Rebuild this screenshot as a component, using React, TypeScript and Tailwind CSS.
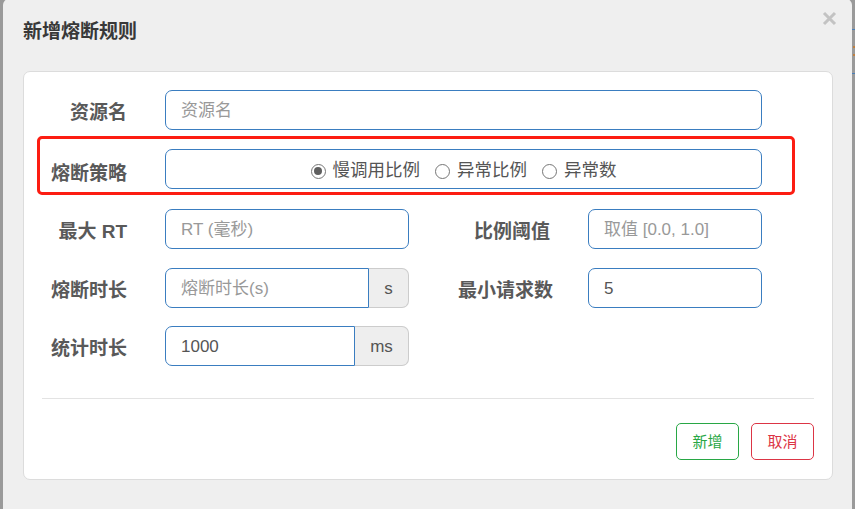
import React from "react";

const FONT = { fontFamily: '"Liberation Sans", "Noto Sans CJK SC", sans-serif' };

function Label({ children, className = "" }: { children: React.ReactNode; className?: string }) {
  return (
    <div className={`text-right text-[19px] font-bold text-[#595959] leading-none ${className}`}>
      {children}
    </div>
  );
}

function Input({ placeholder, value, className = "" }: { placeholder?: string; value?: string; className?: string }) {
  return (
    <div
      className={`h-[40px] border border-[#3a7dc0] rounded-[7px] bg-white flex items-center px-[15px] text-[17px] leading-none ${className}`}
    >
      {value ? (
        <span className="text-[#555]">{value}</span>
      ) : (
        <span className="text-[#999]">{placeholder}</span>
      )}
    </div>
  );
}

function AddonInput({ placeholder, value, unit, inputW, addonW }: { placeholder?: string; value?: string; unit: string; inputW: string; addonW: string }) {
  return (
    <div className="flex h-[40px]">
      <div
        className={`${inputW} h-full border border-[#3a7dc0] rounded-l-[7px] bg-white flex items-center px-[15px] text-[17px] leading-none`}
      >
        {value ? <span className="text-[#555]">{value}</span> : <span className="text-[#999]">{placeholder}</span>}
      </div>
      <div
        className={`${addonW} h-full border border-l-0 border-[#ccc] rounded-r-[7px] bg-[#eee] flex items-center justify-center text-[17px] text-[#555] leading-none`}
      >
        {unit}
      </div>
    </div>
  );
}

function Radio({ checked, label }: { checked?: boolean; label: string }) {
  return (
    <div className="flex items-center gap-[7px]">
      <span className="w-[15px] h-[15px] rounded-full border-[1.5px] border-[#767676] bg-white flex items-center justify-center">
        {checked && <span className="w-[8px] h-[8px] rounded-full bg-[#5f5f5f]" />}
      </span>
      <span className="text-[17.5px] text-[#555] leading-none">{label}</span>
    </div>
  );
}

export default function App() {
  return (
    <div className="w-[855px] h-[509px] bg-[#9a9a9a] overflow-hidden relative" style={FONT}>
      <div className="absolute right-0 top-[29px] w-[3px] h-px bg-[#4a7fb8]" />
      <div className="absolute right-0 top-[73px] w-[3px] h-px bg-[#4a7fb8]" />
      <div className="absolute right-0 top-[46px] w-[2px] h-[2px] bg-[#c08040]" />
      <div className="absolute right-0 top-[54px] w-[2px] h-[2px] bg-[#c08040]" />
      <div className="ml-[3px] w-[849px] h-[520px] -mt-px bg-[#efefef] rounded-t-[6px] flex flex-col">
        <div className="h-[72px] flex items-start justify-between pl-[20px] pr-[15px]">
          <div className="mt-[23px] text-[19px] font-bold text-[#383838] leading-none">新增熔断规则</div>
          <svg className="mt-[12px]" width="15" height="15" viewBox="0 0 15 15">
            <path d="M2 2 L13 13 M13 2 L2 13" stroke="#c3c3c3" strokeWidth="3" strokeLinecap="butt" />
          </svg>
        </div>
        <div className="ml-[20px] w-[810px] h-[409px] bg-white border border-[#dcdcdc] rounded-[7px] px-[18px] pt-[18px]">
          <div className="flex items-center h-[40px]">
            <Label className="w-[85px] mt-[5px]">资源名</Label>
            <Input placeholder="资源名" className="ml-[38px] w-[597px]" />
          </div>

          <div className="-ml-[5px] w-[758px] mt-[6px] border-[3px] border-[#fc1d12] rounded-[5px] h-[59px] flex items-start pt-[10px] pl-[5px]">
            <Label className="w-[82px] mt-[15px]">熔断策略</Label>
            <div className="ml-[38px] w-[597px] h-[40px] border border-[#3a7dc0] rounded-[7px] bg-white flex items-center justify-center gap-[15px] pt-[4px]">
              <Radio checked label="慢调用比例" />
              <Radio label="异常比例" />
              <Radio label="异常数" />
            </div>
          </div>

          <div className="flex items-center h-[40px] mt-[14px]">
            <Label className="w-[85px] mt-[5px]">最大 RT</Label>
            <Input placeholder="RT (毫秒)" className="ml-[38px] w-[244px]" />
            <Label className="w-[141px] mt-[5px]">比例阈值</Label>
            <Input placeholder="取值 [0.0, 1.0]" className="ml-[38px] w-[174px]" />
          </div>

          <div className="flex items-center h-[40px] mt-[19px]">
            <Label className="w-[85px] mt-[5px]">熔断时长</Label>
            <div className="ml-[38px]">
              <AddonInput placeholder="熔断时长(s)" unit="s" inputW="w-[204px]" addonW="w-[40px]" />
            </div>
            <Label className="w-[144px] mt-[5px]">最小请求数</Label>
            <Input value="5" className="ml-[35px] w-[174px]" />
          </div>

          <div className="flex items-center h-[40px] mt-[18px]">
            <Label className="w-[85px] mt-[5px]">统计时长</Label>
            <div className="ml-[38px]">
              <AddonInput value="1000" unit="ms" inputW="w-[190px]" addonW="w-[54px]" />
            </div>
          </div>

          <div className="mt-[32px] h-px bg-[#e3e3e3]" />

          <div className="flex justify-end gap-[12px] mt-[24px]">
            <button className="w-[63px] h-[37px] border border-[#28a745] rounded-[5px] text-[15px] text-[#28a745] bg-white leading-none">
              新增
            </button>
            <button className="w-[63px] h-[37px] border border-[#dc3545] rounded-[5px] text-[15px] text-[#dc3545] bg-white leading-none">
              取消
            </button>
          </div>
        </div>
      </div>
    </div>
  );
}
